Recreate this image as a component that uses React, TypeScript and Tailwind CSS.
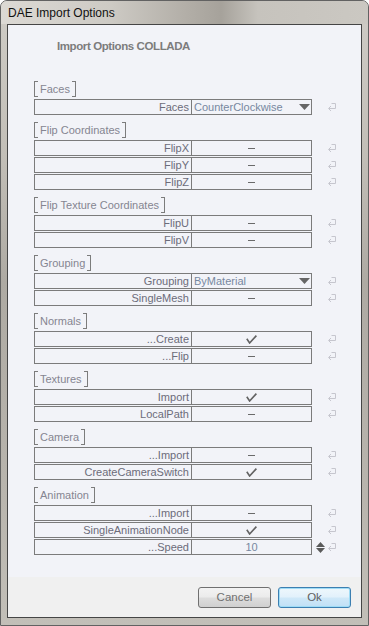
import React from 'react'

type Value =
  | { kind: 'combo'; text: string }
  | { kind: 'dash' }
  | { kind: 'check' }
  | { kind: 'number'; text: string }

interface Option {
  label: string
  value: Value
}

interface Section {
  title: string
  options: Option[]
}

const dash: Value = { kind: 'dash' }
const check: Value = { kind: 'check' }

const sections: Section[] = [
  { title: 'Faces', options: [{ label: 'Faces', value: { kind: 'combo', text: 'CounterClockwise' } }] },
  {
    title: 'Flip Coordinates',
    options: [
      { label: 'FlipX', value: dash },
      { label: 'FlipY', value: dash },
      { label: 'FlipZ', value: dash },
    ],
  },
  {
    title: 'Flip Texture Coordinates',
    options: [
      { label: 'FlipU', value: dash },
      { label: 'FlipV', value: dash },
    ],
  },
  {
    title: 'Grouping',
    options: [
      { label: 'Grouping', value: { kind: 'combo', text: 'ByMaterial' } },
      { label: 'SingleMesh', value: dash },
    ],
  },
  {
    title: 'Normals',
    options: [
      { label: '...Create', value: check },
      { label: '...Flip', value: dash },
    ],
  },
  {
    title: 'Textures',
    options: [
      { label: 'Import', value: check },
      { label: 'LocalPath', value: dash },
    ],
  },
  {
    title: 'Camera',
    options: [
      { label: '...Import', value: dash },
      { label: 'CreateCameraSwitch', value: check },
    ],
  },
  {
    title: 'Animation',
    options: [
      { label: '...Import', value: dash },
      { label: 'SingleAnimationNode', value: check },
      { label: '...Speed', value: { kind: 'number', text: '10' } },
    ],
  },
]

function ResetIcon() {
  return (
    <svg width="9" height="8" viewBox="0 0 9 8" className="shrink-0">
      <path d="M4.5 0.5 H8.5 V5.5 H2" fill="none" stroke="#c6c6ce" strokeWidth="1" />
      <path d="M4 3 L1.5 5.5 L4 8" fill="none" stroke="#c6c6ce" strokeWidth="1" />
    </svg>
  )
}

function Spinner() {
  return (
    <svg width="9" height="11" viewBox="0 0 9 11" className="shrink-0">
      <path d="M4.5 0 L9 5 H0 Z" fill="#5a5a5a" />
      <path d="M0 6 H9 L4.5 11 Z" fill="#5a5a5a" />
    </svg>
  )
}

function CheckMark() {
  return (
    <svg width="11" height="9" viewBox="0 0 11 9">
      <path d="M0.8 3.8 L3.6 8 L10.4 0.6" fill="none" stroke="#626262" strokeWidth="1.6" strokeLinejoin="miter" />
    </svg>
  )
}

function ValueCell({ value }: { value: Value }) {
  if (value.kind === 'combo') {
    return (
      <div className="flex-1 flex items-center justify-between pl-[2px] pr-[1px] text-[#7788a0]">
        <span>{value.text}</span>
        <svg width="11" height="6" viewBox="0 0 11 6">
          <path d="M0 0 H11 L5.5 6 Z" fill="#666" />
        </svg>
      </div>
    )
  }
  if (value.kind === 'check') {
    return (
      <div className="flex-1 flex items-center justify-center">
        <CheckMark />
      </div>
    )
  }
  if (value.kind === 'number') {
    return <div className="flex-1 flex items-center justify-center text-[#7788a0]">{value.text}</div>
  }
  return (
    <div className="flex-1 flex items-center justify-center">
      <span className="w-[7px] h-[1px] bg-[#6a6a6a]" />
    </div>
  )
}

function GroupLabel({ title }: { title: string }) {
  return (
    <div className="h-[16px] mb-[2px] flex">
      <span className="relative h-[16px] px-[5px] flex items-center border-x border-[#7c7c7c] text-[#858591] leading-none before:absolute before:left-0 before:top-0 before:h-full before:w-[3px] before:border-y before:border-[#7c7c7c] before:content-[''] after:absolute after:right-0 after:top-0 after:h-full after:w-[3px] after:border-y after:border-[#7c7c7c] after:content-['']">
        {title}
      </span>
    </div>
  )
}

export default function App() {
  return (
    <div
      className="w-[369px] h-[626px] flex flex-col border border-[#626262] rounded-t-[7px] overflow-hidden bg-[linear-gradient(180deg,#cfccc6_0%,#c2beb7_25%,#aeaaa3_45%,#b9b5ae_80%,#c2bfb8_100%)] text-[11px]"
      style={{ fontFamily: '"Liberation Sans", Arial, sans-serif' }}
    >
      {/* Title bar */}
      <div className="h-[23px] shrink-0 flex items-center pl-[7px] bg-[linear-gradient(90deg,#dcd9d4_0%,#cdcac4_30%,#b3afa8_50%,#a6a29b_60%,#c6c3bd_70%,#cbc8c2_100%)]">
        <span className="text-[12px] text-[#111] pt-[1px]">DAE Import Options</span>
      </div>

      {/* Client area */}
      <div className="flex-1 mx-[6px] mb-[7px] border border-[#454545] flex flex-col bg-[#f2f3f8]">
        <div className="flex-1 pt-[14px]">
          <div className="pl-[49px] h-[14px] leading-[14px] text-[11.5px] font-bold tracking-[-0.4px] text-[#7c7c7c]">
            Import Options COLLADA
          </div>

          <div className="mt-[28px] pl-[26px] flex flex-col gap-[7px]">
            {sections.map((section) => (
              <div key={section.title}>
                <GroupLabel title={section.title} />
                <div className="flex flex-col gap-[1px]">
                  {section.options.map((opt, i) => (
                    <div key={section.title + i} className="flex items-center">
                      <div className="w-[278px] h-[16px] flex border border-[#7b7b7b] leading-none">
                        <div className="w-[157px] border-r border-[#7b7b7b] flex items-center justify-end pr-[2px] text-[#6c6c7a] whitespace-nowrap">
                          {opt.label}
                        </div>
                        <ValueCell value={opt.value} />
                      </div>
                      <div className="flex items-center pl-[4px] gap-[2px]">
                        {opt.value.kind === 'number' ? <Spinner /> : <span className="w-[9px]" />}
                        <ResetIcon />
                      </div>
                    </div>
                  ))}
                </div>
              </div>
            ))}
          </div>
        </div>

        {/* Button bar */}
        <div className="h-[40px] shrink-0 bg-[#f0f0f0] flex justify-end items-start pt-[10px] pr-[10px] gap-[7px]">
          <button className="w-[73px] h-[21px] rounded-[3px] border border-[#707070] bg-[linear-gradient(180deg,#f3f3f3_0%,#ebebeb_48%,#dddddd_52%,#d0d0d0_100%)] text-[#707070] text-[11.5px] leading-none">
            Cancel
          </button>
          <button className="w-[73px] h-[21px] rounded-[3px] border border-[#3c7fb1] shadow-[inset_0_0_0_1px_#9fdcf6] bg-[linear-gradient(180deg,#eef7fc_0%,#e2f1fb_48%,#cfe8f8_52%,#c0e0f6_100%)] text-[#606060] text-[11.5px] leading-none">
            Ok
          </button>
        </div>
      </div>
    </div>
  )
}
